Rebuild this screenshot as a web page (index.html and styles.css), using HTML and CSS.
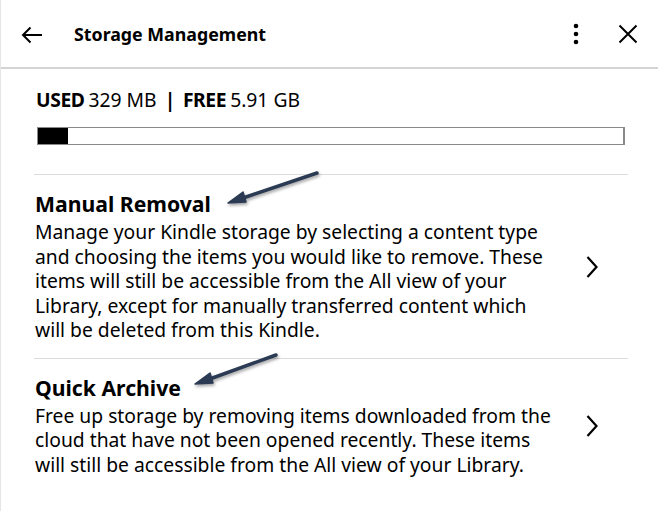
FILE: index.html
```html
<!DOCTYPE html>
<html>
<head>
<meta charset="utf-8">
<link rel="stylesheet" href="styles.css">
</head>
<body>
<div class="page">
  <header class="topbar">
    <svg class="icon back" width="22" height="18" viewBox="0 0 22 18"><path d="M21 9H2M9.5 1.5L2 9l7.5 7.5" fill="none" stroke="#000" stroke-width="2"/></svg>
    <h1 class="title">Storage Management</h1>
    <svg class="icon kebab" width="6" height="22" viewBox="0 0 6 22"><circle cx="3" cy="3" r="2.3"/><circle cx="3" cy="11" r="2.3"/><circle cx="3" cy="19" r="2.3"/></svg>
    <svg class="icon close" width="20" height="20" viewBox="0 0 20 20"><path d="M1.5 1.5l17 17M18.5 1.5l-17 17" fill="none" stroke="#000" stroke-width="2"/></svg>
  </header>
  <main class="content">
    <div class="usage"><b>USED</b>329 MB <b class="sep">|</b> <b>FREE</b>5.91 GB</div>
    <div class="bar"><div class="fill" style="width:30px"></div></div>
    <section class="item">
      <div class="text">
        <h2>Manual Removal</h2>
        <p>Manage your Kindle storage by selecting a content type and choosing the items you would like to remove. These items will still be accessible from the All view of your Library, except for manually transferred content which will be deleted from this Kindle.</p>
      </div>
      <svg class="chev" width="12" height="24" viewBox="0 0 12 24"><path d="M1.5 2l9 10-9 10" fill="none" stroke="#000" stroke-width="2.2"/></svg>
    </section>
    <section class="item">
      <div class="text">
        <h2>Quick Archive</h2>
        <p>Free up storage by removing items downloaded from the cloud that have not been opened recently. These items will still be accessible from the All view of your Library.</p>
      </div>
      <svg class="chev" width="12" height="24" viewBox="0 0 12 24"><path d="M1.5 2l9 10-9 10" fill="none" stroke="#000" stroke-width="2.2"/></svg>
    </section>
  </main>
  <svg class="arrows" width="658" height="511" viewBox="0 0 658 511">
    <defs>
      <filter id="sh" x="-20%" y="-50%" width="140%" height="200%">
        <feDropShadow dx="1" dy="2" stdDeviation="1.5" flood-color="#000" flood-opacity="0.35"/>
      </filter>
    </defs>
    <g fill="#2b3a52" stroke="#2b3a52" filter="url(#sh)">
      <line x1="317" y1="173" x2="240" y2="199" stroke-width="3.5" stroke-linecap="round"/>
      <path d="M228 203 L243 192 L246 202 Z" stroke-width="1.5" stroke-linejoin="round"/>
      <line x1="276" y1="355" x2="207" y2="380" stroke-width="3.5" stroke-linecap="round"/>
      <path d="M195 384 L210 373 L213 383 Z" stroke-width="1.5" stroke-linejoin="round"/>
    </g>
  </svg>
</div>
</body>
</html>
```
FILE: styles.css
```css
html, body {
  margin: 0;
  padding: 0;
  background: #fff;
}
body {
  font-family: "Noto Sans", "Open Sans", sans-serif;
  color: #000;
}
.page {
  position: relative;
  width: 658px;
  height: 511px;
  overflow: hidden;
  border-left: 1px solid #e6e6e6;
  box-sizing: border-box;
}
.topbar {
  height: 67px;
  border-bottom: 2px solid #d4d4d4;
  display: flex;
  align-items: center;
  padding: 0 20px 0 20px;
  box-sizing: content-box;
}
.icon { display: block; flex: none; }
.back { margin-top: 2px; }
.title {
  font-size: 17.8px;
  font-weight: 700;
  margin: 0 0 0 31px;
  flex: 1;
}
.kebab { margin-right: 42px; position: relative; left: 3px; }
.content {
  padding: 18px 30px 0 33px;
}
.usage {
  font-size: 19.3px;
  line-height: 26px;
  padding-left: 2px;
}
.usage b { font-weight: 700; letter-spacing: -0.4px; margin-right: 4px; }
.usage b.sep { margin: 0 3px; }
.bar {
  margin: 14px 3px 0 3px;
  height: 16px;
  border: 1px solid #8a8a8a;
  border-right-width: 2px;
}
.fill {
  height: 100%;
  background: #000;
}
.item {
  display: flex;
  align-items: center;
  border-top: 1px solid #dcdcdc;
  padding: 16px 0 15px 0;
}
.item:first-of-type { margin-top: 29px; }
.text { flex: 1; }
.item h2 {
  font-size: 21.2px;
  font-weight: 700;
  margin: 0 0 3px 1px;
  line-height: 26px;
}
.item p {
  margin: 0 0 0 1px;
  font-size: 19.3px;
  line-height: 24.5px;
  width: 522px;
}
.chev { margin-right: 30px; }
.arrows {
  position: absolute;
  left: -1px;
  top: 0;
  pointer-events: none;
}
```
